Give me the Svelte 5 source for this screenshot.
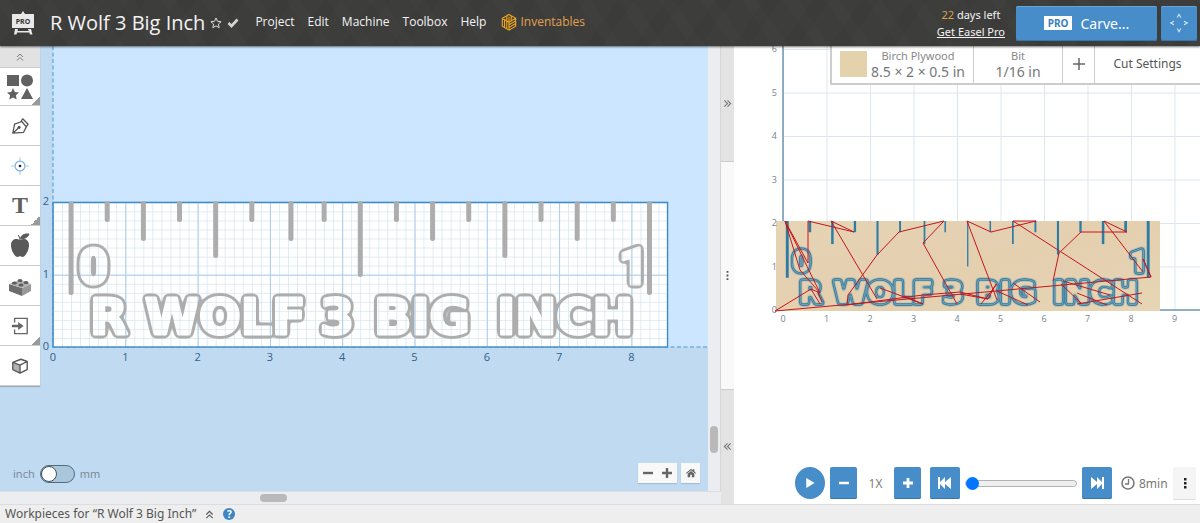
<script>
  const IN = 72.3;
  const OX = 53;
  const OY = 301;
  const P = 43.5;
  const PX = 49;
  const PY = 264;

  // depth of every ruler mark, in canvas pixels below the top edge
  const depths = [89, 16, 35, 16, 52, 16, 35, 16, 71, 16, 35, 16, 52, 16, 35, 16, 89];
  const marks = depths.map((d, i) => ({ x: (0.25 + i * 0.5) * IN + (i === 6 ? 3 : 0), d }));

  // lettering, measured from the lower left corner of the stock
  const letters = [
    { t: '0', x: 26, y: -63, s: 50, digit: true },
    { t: '1', x: 566, y: -63, s: 50, digit: true },
    { t: 'R', x: 37, y: -13, s: 49 },
    { t: 'WOLF', x: 92, y: -13, s: 49 },
    { t: '3', x: 267, y: -13, s: 49 },
    { t: 'BIG', x: 321, y: -13, s: 49 },
    { t: 'INCH', x: 444, y: -13, s: 49 }
  ];

  const K = 0.624;
  const SX = 42;
  const SY = 265;

  const travel = [
    '41,265 417,231 409,213', '41,265 77,243 86,258', '77,243 84,246 88,256',
    '66,224 86,247', '51,175 66,224', '51,175 86,247', '51,175 74,217',
    '74,217 74,175 120,186 97,175 143,253', '113,259 114,249 143,209 165,186 210,175 189,197 223,258',
    '146,242 189,258', '113,259 189,249 226,246 254,253', '170,250 189,258',
    '263,254 233,175 257,186 302,175 279,175 408,258', '226,248 254,253 262,238',
    '263,245 294,259', '247,258 263,238', '279,237 306,256', '319,235 325,207 347,186 393,186 370,175 409,226',
    '409,213 417,231', '329,235 376,249', '343,247 373,259', '343,258 408,247', '327,238 348,258'
  ];

  let metric = $state(false);
  let progress = $state(0);
  const nums = (n) => Array.from({ length: n }, (_, i) => i);
</script>

<div class="app">
  <header>
    <svg class="easel" viewBox="0 0 24 24" aria-hidden="true">
      <path d="M12 0l2 3h-4z M1 3h22v14H1z M4 18h3l-1.500 5.500H3z M17 18h3l1.500 5.500H19z M5 20h14v1.500H5z" fill="#e9e9e9" />
      <text x="12" y="12.500" text-anchor="middle">PRO</text>
    </svg>
    <h1>R Wolf 3 Big Inch</h1>
    <svg class="star" viewBox="0 0 12 12" aria-hidden="true"><path d="M6 1l1.500 3.300 3.600.4-2.700 2.400.8 3.600L6 8.900l-3.200 1.800.8-3.600L.9 4.700l3.600-.4z" fill="none" stroke="#ddd" /></svg>
    <svg class="tick" viewBox="0 0 12 12" aria-hidden="true"><path d="M1.500 6l3 3 6-6.500" fill="none" stroke="#d4d4d4" stroke-width="2.600" /></svg>
    <nav>
      <a href="#project">Project</a>
      <a href="#edit">Edit</a>
      <a href="#machine">Machine</a>
      <a href="#toolbox">Toolbox</a>
      <a href="#help">Help</a>
      <a class="brand" href="#inventables">
        <svg viewBox="0 0 18 20" aria-hidden="true">
          <path d="M9 1l7.500 4.300v8.800L9 18.600l-7.500-4.500V5.300z M9 9.800v8.800M1.500 5.300L9 9.800l7.500-4.500M9 3.500V9M11.500 2.800v5.200M6.500 3l0 5M4 7v8.300M6.500 8.500v8.300M16.500 8.200L9 12.600M16.500 11.200L9 15.600" fill="none" stroke="#eba21d" stroke-width="1.300" />
        </svg>Inventables</a>
    </nav>
    <div class="trial">
      <span><b>22</b> days left</span>
      <a href="#pro">Get Easel Pro</a>
    </div>
    <button class="carve"><span>PRO</span>Carve...</button>
    <button class="jog" aria-label="Jog machine">
      <svg viewBox="0 0 24 24"><path d="M10 6l2-3.500L14 6M10 18l2 3.500 2-3.500M6.500 10L3 12l3.500 2M17.500 10l3.500 2-3.500 2" fill="none" stroke="#d7e8f6" stroke-width="1.200" /></svg>
    </button>
  </header>

  <main>
    <section class="design">
      <div class="canvas">
        <svg class="board" width="100%" height="100%" aria-label="Design canvas">
          <defs>
            <pattern id="fine" x={OX} y={OY} width={IN / 8} height={IN / 8} patternUnits="userSpaceOnUse">
              <path d="M0 0H10M0 0V10" stroke="#d3e4ef" stroke-width="1.400" fill="none" />
            </pattern>
            <pattern id="coarse" x={OX} y={OY} width={IN} height={IN} patternUnits="userSpaceOnUse">
              <path d="M0 0H73M0 0V73" stroke="#a9cdec" stroke-width="2" fill="none" />
            </pattern>
            <filter id="halo" x="-20%" y="-20%" width="140%" height="140%" color-interpolation-filters="sRGB">
              <feGaussianBlur in="SourceAlpha" stdDeviation="1.9" />
              <feComponentTransfer result="fat"><feFuncA type="linear" slope="12" intercept="-0.5" /></feComponentTransfer>
              <feFlood flood-color="#adadad" />
              <feComposite operator="in" in2="fat" />
              <feComposite operator="out" in2="SourceAlpha" />
            </filter>
          </defs>
          <rect width="100%" height="100%" fill="#c0daf1" />
          <rect x={OX} width="100%" height={OY} fill="#cce6ff" />
          <path d="M{OX} 0V{OY}M{OX} {OY}H3000" stroke="#4f95cf" stroke-dasharray="4 2.500" fill="none" />
          <rect x={OX} y={OY - 2 * IN} width={8.5 * IN} height={2 * IN} fill="#fff" />
          <rect x={OX} y={OY - 2 * IN} width={8.5 * IN} height={2 * IN} fill="url(#fine)" />
          <rect x={OX} y={OY - 2 * IN} width={8.5 * IN} height={2 * IN} fill="url(#coarse)" />
          <rect x={OX} y={OY - 2 * IN} width={8.5 * IN} height={2 * IN} fill="none" stroke="#3d8ac9" stroke-width="1.400" />
          <g class="shape" transform="translate({OX} {OY})">
            {#each marks as m}
              <line x1={m.x} x2={m.x} y1={-2 * IN + 1} y2={-2 * IN + m.d + 1} />
            {/each}
            <g filter="url(#halo)">
              {#each letters as l}
                <text class:digit={l.digit} x={l.x} y={l.y} font-size={l.s}>{l.t}</text>
              {/each}
            </g>
          </g>
          <g class="scale">
            {#each nums(9) as n}<text x={OX + n * IN} y={OY + 14} text-anchor="middle">{n}</text>{/each}
            {#each nums(3) as n}<text x={OX - 4} y={OY - n * IN + 3} text-anchor="end">{n}</text>{/each}
          </g>
        </svg>

        <div class="tools">
          <button class="fold" aria-label="Collapse tools"><svg viewBox="0 0 10 10"><path d="M2 5l3-3 3 3M2 8.500l3-3 3 3" fill="none" stroke="#777" /></svg></button>
          <button class="more first" aria-label="Shapes"><svg class="wide" viewBox="0 0 28 28"><path d="M1 2h12v11H1z M7 15l1.800 3.900 4.200.5-3.100 2.900.8 4.200L7 24.400l-3.700 2.100.8-4.200L1 19.400l4.200-.5z M21 15l6 11H15z" fill="#616161" /><circle cx="21" cy="7.500" r="6" fill="#616161" /></svg></button>
          <button aria-label="Pen"><svg viewBox="0 0 20 20"><path d="M2 18L4 8l8-3 5 6-3 6zM11 5l2-3 6 6-2 3M2 18l6-5.500" fill="none" stroke="#555" stroke-width="1.400" stroke-linejoin="round" /><circle cx="9" cy="11.500" r="1.700" fill="#555" /></svg></button>
          <button aria-label="Drill point"><svg viewBox="0 0 20 20"><circle cx="10" cy="10" r="5.500" fill="none" stroke="#7cb0e0" stroke-width="1.300" /><path d="M10 0v5M10 15v5M0 10h5M15 10h5" stroke="#9bc3e8" /><circle cx="10" cy="10" r="1.500" fill="#223" /></svg></button>
          <button class="more letter">T</button>
          <button aria-label="Icons"><svg class="wide" viewBox="0 0 28 28"><path d="M14 8c3-2 9-1.500 9 5 0 6-4 12-6.500 12-1.500 0-1.500-.7-2.500-.7s-1 .7-2.500.7C9 25 5 19 5 13c0-6.500 6-7 9-5z" fill="#595959" /><path d="M14 8c0-2-.6-3.500-2-5M14.500 6.500C15 3.500 18 1.500 23 2c-1.500 4-5 5-8.500 4.500z" fill="#595959" stroke="#595959" /></svg></button>
          <button aria-label="Apps"><svg class="wide" viewBox="0 0 28 28"><path d="M3 12l13 4v8L3 19z" fill="#6d6d6d" /><path d="M16 16l9-4v7l-9 5z" fill="#999" /><path d="M3 12l11-4 11 4-9 4z" fill="#b0b0b0" /><g fill="#5c5c5c"><ellipse cx="8.500" cy="11" rx="2.500" ry="1.600" /><ellipse cx="14" cy="8.500" rx="2.500" ry="1.600" /><ellipse cx="20" cy="10.500" rx="2.500" ry="1.600" /><ellipse cx="15" cy="13" rx="2.500" ry="1.600" /></g></svg></button>
          <button class="more" aria-label="Import"><svg viewBox="0 0 20 20"><path d="M4 6V1.500h14v17H4V14" fill="none" stroke="#666" stroke-width="1.500" /><path d="M1 8.700h7V5.500l6 4.500-6 4.500v-3.200H1z" fill="#666" /></svg></button>
          <button aria-label="3D"><svg viewBox="0 0 20 20"><path d="M2 6l9-3.500L18 5v9l-8 4-8-4z M2 6l8 3 8-4M10 9v9" fill="none" stroke="#555" stroke-width="1.500" stroke-linejoin="round" /><path d="M2 6l8 3v9l-8-4z" fill="#666" opacity=".5" /></svg></button>
        </div>

        <label class="units">inch <input type="checkbox" bind:checked={metric} /> mm</label>
        <div class="zoom">
          <div>
            <button aria-label="Zoom out"><svg viewBox="0 0 10 10"><path d="M0 5h10" stroke="#666" stroke-width="2.400" /></svg></button>
            <button aria-label="Zoom in"><svg viewBox="0 0 10 10"><path d="M0 5h10M5 0v10" stroke="#666" stroke-width="2.400" /></svg></button>
          </div>
          <button class="home" aria-label="Fit view"><svg viewBox="0 0 12 12"><path d="M0 6l6-5 2 1.700V1.500h2v2.800L12 6l-.8.8L6 2.600.8 6.800z M2 7l4-3.300L10 7v4H7V8H5v3H2z" fill="#666" /></svg></button>
        </div>
      </div>
      <div class="vbar"><i></i></div>
      <div class="hbar"><i></i></div>
    </section>

    <div class="split">
      <button aria-label="Expand design"><svg viewBox="0 0 10 10"><path d="M1.500 1.500L5 5 1.500 8.500M5 1.500L8.500 5 5 8.500" fill="none" stroke="#777" stroke-width="1.200" /></svg></button>
      <button class="grip" aria-label="Resize panels"><svg viewBox="0 0 10 10"><path d="M4 0h2v2H4zM4 4h2v2H4zM4 8h2v2H4z" fill="#555" /></svg></button>
      <button aria-label="Expand preview"><svg viewBox="0 0 10 10"><path d="M5 1.500L1.500 5 5 8.500M8.500 1.500L5 5l3.500 3.500" fill="none" stroke="#777" stroke-width="1.200" /></svg></button>
    </div>

    <section class="preview">
      <svg class="board" width="100%" height="100%" aria-label="Toolpath preview">
        <defs>
          <pattern id="inch" x={PX} y={PY} width={P} height={P} patternUnits="userSpaceOnUse">
            <path d="M0 0H44M0 0V44" stroke="#dce6f0" stroke-width="2" fill="none" />
          </pattern>
          <linearGradient id="wood" x2="1" y2="1">
            <stop offset="0" stop-color="#e6d4b5" /><stop offset=".5" stop-color="#e4cfaf" /><stop offset="1" stop-color="#e6d5b4" />
          </linearGradient>
          <filter id="groove" x="-20%" y="-20%" width="140%" height="140%" color-interpolation-filters="sRGB">
            <feGaussianBlur in="SourceAlpha" stdDeviation="0.8" />
            <feComponentTransfer result="band"><feFuncA type="table" tableValues="0 .5 .9 .9 .7 .6 .7 .9 .8 .3 0" /></feComponentTransfer>
            <feFlood flood-color="#2c7ca6" />
            <feComposite operator="in" in2="band" />
          </filter>
        </defs>
        <rect x={PX} width="100%" height={PY} fill="url(#inch)" />
        <path d="M{PX} 0V{PY}H3000" fill="none" stroke="#6c98b0" stroke-width="1.500" />
        <rect x={SX} y={SY - 90} width="384" height="90" fill="url(#wood)" />
        <g class="pscale">
          {#each nums(10) as n}<text x={PX + n * P} y={PY + 12} text-anchor="middle">{n}</text>{/each}
          {#each nums(7) as n}<text x={PX - 6} y={PY - n * P + 3} text-anchor="end">{n}</text>{/each}
        </g>
        <g class="cut" transform="translate({SX} {SY})">
          {#each marks as m, i}
            <line x1={m.x * K} x2={m.x * K} y1="-90" y2={-90 + (m.d + 2) * K} stroke-width={1.3 + Math.abs(i - 8) * 0.2} />
          {/each}
          <g filter="url(#groove)">
            {#each letters as l}
              <text class:digit={l.digit} x={l.x * K} y={l.y * K} font-size={l.s * K}>{l.t}</text>
            {/each}
          </g>
        </g>
        {#each travel as points}<polyline {points} fill="none" stroke="#c4161c" />{/each}
      </svg>

      <div class="setup">
        <button class="stock"><i></i><span><small>Birch Plywood</small>8.5 × 2 × 0.5 in</span></button>
        <button class="bit"><span><small>Bit</small>1/16 in</span></button>
        <button class="add" aria-label="Add bit"><svg viewBox="0 0 12 12"><path d="M0 6h12M6 0v12" stroke="#666" stroke-width="1.500" /></svg></button>
        <button class="cuts">Cut Settings</button>
      </div>

      <div class="player">
        <button class="play" aria-label="Play"><svg viewBox="0 0 12 12"><path d="M1.500 0l10 6-10 6z" fill="#fff" /></svg></button>
        <button class="slow" aria-label="Slower"><svg viewBox="0 0 12 12"><path d="M1 6h10" stroke="#fff" stroke-width="2.500" /></svg></button>
        <output>1X</output>
        <button class="fast" aria-label="Faster"><svg viewBox="0 0 12 12"><path d="M1 6h10M6 1v10" stroke="#fff" stroke-width="2.800" /></svg></button>
        <button class="jump" aria-label="To start"><svg viewBox="0 0 14 12"><path d="M0 0h2v5l5-5v5l6-5v12L7 7v5L2 7v5H0z" fill="#fff" /></svg></button>
        <input type="range" min="0" max="100" bind:value={progress} aria-label="Progress" />
        <button class="jump" aria-label="To end"><svg viewBox="0 0 14 12"><path d="M14 0h-2v5L7 0v5L1 0v12l6-5v5l5-5v5h2z" fill="#fff" /></svg></button>
        <svg class="clock" viewBox="0 0 14 14" aria-hidden="true"><circle cx="7" cy="7" r="6" fill="none" stroke="#777" stroke-width="1.600" /><path d="M7.500 3v5H4" fill="none" stroke="#777" stroke-width="1.300" /></svg>
        <span class="time">8min</span>
        <button class="menu" aria-label="More"><svg viewBox="0 0 12 12"><path d="M5 1h2.500v2.500H5zM5 5h2.500v2.500H5zM5 9h2.500v2.500H5z" fill="#222" /></svg></button>
      </div>
    </section>
  </main>

  <footer>
    <span>Workpieces for “R Wolf 3 Big Inch”</span>
    <svg class="up" viewBox="0 0 10 10" aria-hidden="true"><path d="M1.500 5L5 1.500 8.500 5M1.500 9L5 5.500 8.500 9" fill="none" stroke="#555" stroke-width="1.200" /></svg>
    <button aria-label="Help">?</button>
  </footer>
</div>

<style>
  :global(body) { margin: 0; }
  .app { display: flex; flex-direction: column; min-height: 100vh; font-family: "Noto Sans", "Open Sans", sans-serif; color: #666; background: #eee; overflow: hidden; }
  button { font: inherit; color: inherit; border: 0; padding: 0; margin: 0; background: none; display: flex; align-items: center; justify-content: center; cursor: pointer; }
  svg { flex: none; }
  a { color: inherit; text-decoration: none; }

  header { display: flex; align-items: center; height: 46px; box-sizing: border-box; padding: 0 3px 0 11px; color: #f3f3f3; position: relative; z-index: 2; box-shadow: 0 1px 2px #0008; background: repeating-linear-gradient(55deg, #fff0 0 22px, #ffffff03 22px 34px), repeating-linear-gradient(125deg, #0000 0 26px, #00000008 26px 40px), #3d3d3c; }
  .easel { width: 24px; height: 24px; margin-right: 15px; }
  .easel text { font: 700 7px "Noto Sans", sans-serif; fill: #333; }
  h1 { font: 400 20px/26px "Open Sans", sans-serif; margin: 0 5px 0 0; white-space: nowrap; }
  .star, .tick { width: 12px; height: 12px; margin-right: 5px; }
  nav { display: flex; gap: 13px; margin-left: 11px; font-family: "Open Sans", sans-serif; font-size: 12px; line-height: 20px; padding-bottom: 2px; }
  .brand { display: flex; align-items: center; gap: 3px; color: #e3a04e; margin-left: 2px; }
  .brand svg { width: 16px; height: 19px; }
  .trial { margin-left: auto; margin-right: 11px; display: flex; flex-direction: column; align-items: center; font-size: 11px; line-height: 17px; white-space: nowrap; }
  .trial b { font-weight: 400; color: #dda346; }
  .trial a { text-decoration: underline; }
  .carve, .jog { height: 35px; background: #478dc9; border-radius: 2px; box-shadow: inset 0 1px #68a4d7, inset 0 -1px #3876ad; color: #fff; }
  .carve { width: 141px; gap: 8px; font-size: 14px; margin-right: 4px; }
  .carve span { background: #fff; color: #387fc0; font-size: 10px; line-height: 14px; font-weight: 700; padding: 0 4px; }
  .jog { width: 36px; }
  .jog svg { width: 22px; height: 22px; }

  main { flex: 1; display: grid; grid-template-columns: 721fr 13px 466fr; min-height: 0; }
  .design { display: grid; grid-template: 1fr 13px / 1fr 13px; background: #ebedf0; }
  .canvas, .preview { display: grid; min-width: 0; min-height: 0; overflow: hidden; }
  .canvas > *, .preview > * { grid-area: 1 / 1; }
  .board { display: block; min-height: 320px; }
  .shape { stroke: #adadad; stroke-width: 5; stroke-linecap: round; stroke-linejoin: round; }
  .shape text, .cut text { font-family: "DejaVu Sans", sans-serif; font-weight: 700; }
  .shape .digit, .cut .digit { font-family: Roboto, sans-serif; font-weight: 900; }
  .shape text { stroke-width: 3; }
  .scale { font: 11px "Open Sans", sans-serif; fill: #33608a; stroke: none; }
  .pscale { font: 9px "Open Sans", sans-serif; fill: #768491; }
  .cut { stroke: #2c7ca6; }
  .cut text { stroke-width: 3; stroke-linejoin: round; }

  .tools { width: 40px; align-self: start; justify-self: start; z-index: 1; box-shadow: 0 1px 1px #0003; }
  .tools button { width: 100%; height: 40px; box-sizing: border-box; background: #fff; border-bottom: 1px solid #ccc; }
  .tools .fold { height: 22px; background: #e2e2e2; }
  .tools .first { height: 38px; }
  .tools svg { width: 18px; height: 18px; }
  .tools .wide { width: 28px; height: 28px; }
  .tools .fold svg { width: 10px; height: 10px; }
  .tools .more { background: linear-gradient(135deg, #fff0 50%, #999 50%) right bottom / 9px 9px no-repeat, #fff; }
  .tools .letter { font: 700 24px "Liberation Serif", serif; color: #606060; }

  .units { align-self: end; justify-self: start; display: flex; align-items: center; gap: 5px; margin: 0 0 7px 13px; font-size: 11px; line-height: 20px; color: #7b8996; }
  .units input { appearance: none; margin: 0; width: 35px; height: 18px; box-sizing: border-box; border: 1px solid #526b7d; border-radius: 9px; background: #a9c6db; display: flex; }
  .units input::before { content: ""; width: 14px; height: 14px; border: 1px solid #46515a; border-radius: 50%; background: #fff; }
  .units input:checked { justify-content: flex-end; }
  .zoom { align-self: end; justify-self: end; display: flex; gap: 4px; margin: 0 8px 8px 0; }
  .zoom div, .home { display: flex; width: 39px; height: 20px; background: #f8f8f8; box-shadow: 0 1px 1px #0002; }
  .zoom div button { flex: 1; }
  .zoom .home { width: 19px; }
  .zoom svg { width: 10px; height: 10px; }
  .vbar { border-right: 1px solid #d5d5d5; display: flex; justify-content: center; align-items: end; }
  .vbar i { width: 8px; height: 27px; border-radius: 4px; background: #b9b9b9; margin-bottom: 38px; }
  .hbar { grid-column: 1 / 3; border-top: 1px solid #dedede; display: flex; align-items: center; }
  .hbar i { width: 27px; height: 8px; border-radius: 4px; background: #b9b9b9; margin-left: 36%; }

  .split { display: grid; grid-template-rows: 1fr 2fr 1fr; background: #e3e3e3; }
  .split svg { width: 9px; height: 9px; }
  .split .grip { background: #f9f9f9; border: solid #ccc; border-width: 1px 0; }

  .preview { background: #fff; }
  .setup { align-self: start; justify-self: end; display: flex; height: 39px; box-sizing: border-box; background: #fff; border: solid #ccc; border-width: 0 0 2px 2px; font-size: 14px; line-height: 16px; color: #777; white-space: nowrap; }
  .setup button { padding-bottom: 2px; }
  .setup button + button { border-left: 1px solid #ccc; }
  .setup small { display: block; font-size: 11px; line-height: 16px; color: #888; }
  .stock { width: 141px; gap: 4px; }
  .stock i { width: 27px; height: 26px; background: #e3d2ac; }
  .setup .bit { width: 89px; }
  .setup .add { width: 32px; }
  .add svg { width: 12px; height: 12px; }
  .setup .cuts { width: 106px; font-size: 12px; color: #555; }

  .player { align-self: end; justify-self: end; display: flex; align-items: center; height: 32px; margin: 0 4px 5px 0; }
  .player button { height: 32px; background: #478dc9; border-radius: 2px; box-shadow: inset 0 -1px #3876ad; }
  .player svg { width: 12px; height: 12px; }
  .player .play { width: 30px; border-radius: 50%; margin-right: 5px; box-shadow: none; }
  .player .play svg { width: 10px; }
  .player .slow, .player .fast { width: 27px; }
  output { width: 37px; text-align: center; font: 12px "Open Sans", sans-serif; color: #777; }
  .player .fast { margin-right: 9px; }
  .player .jump { width: 30px; }
  .player .jump svg { width: 14px; }
  .player input { appearance: none; width: 112px; height: 14px; margin: 0 5px; background: none; }
  .player input::-webkit-slider-runnable-track { height: 7px; box-sizing: border-box; border: 1px solid #b2b2b2; border-radius: 4px; background: #efefef; }
  .player input::-webkit-slider-thumb { appearance: none; width: 13px; height: 13px; margin-top: -4px; border-radius: 50%; background: #0075ff; }
  .player .clock { width: 14px; height: 14px; margin: 0 4px 0 9px; }
  .time { width: 34px; font-size: 12px; color: #777; }
  .player .menu { width: 23px; background: #f5f5f5; box-shadow: 0 1px #ddd; }

  footer { display: flex; align-items: center; height: 19px; padding-left: 5px; border-top: 1px solid #ddd; box-sizing: border-box; font-size: 12px; line-height: 18px; color: #555; }
  .up { width: 9px; height: 9px; margin: 0 9px; }
  footer button { width: 12px; height: 12px; border-radius: 50%; background: #3d86c3; color: #fff; font-size: 10px; line-height: 12px; font-weight: 700; }
</style>
